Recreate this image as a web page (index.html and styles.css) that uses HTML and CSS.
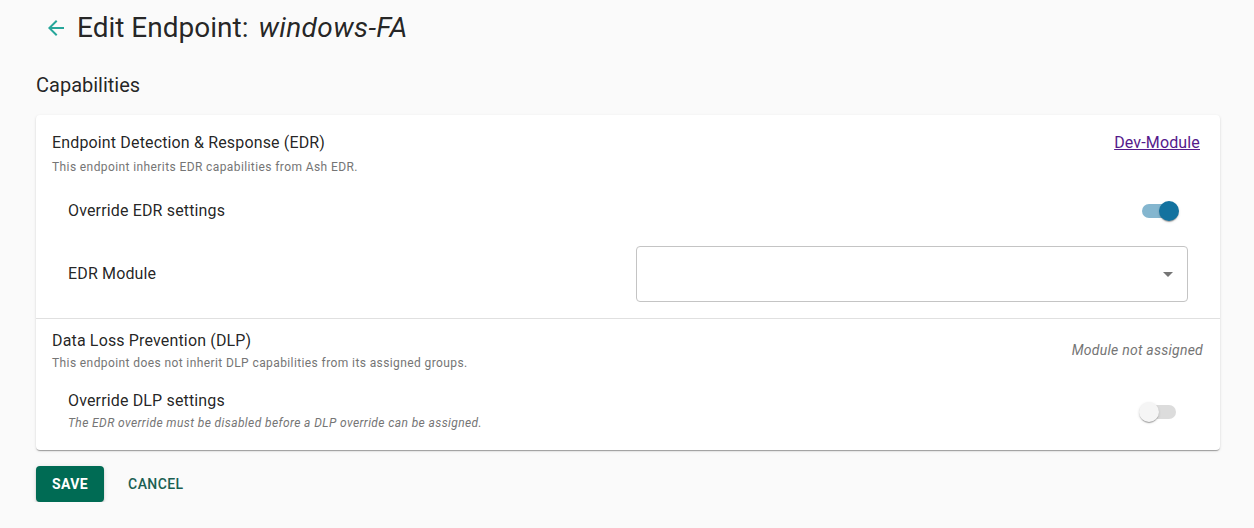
FILE: index.html
```html
<!DOCTYPE html>
<html lang="en">
<head>
  <meta charset="UTF-8">
  <title>Edit Endpoint</title>
  <link rel="stylesheet" href="styles.css">
</head>
<body>
  <div class="page">
    <div class="page-header">
      <a class="back-link" href="#">
        <svg width="24" height="24" viewBox="0 0 24 24"><path d="M20 11H7.83l5.59-5.59L12 4l-8 8 8 8 1.41-1.41L7.83 13H20v-2z" fill="#26a69a"/></svg>
      </a>
      <h1 class="page-title">Edit Endpoint: <em>windows-FA</em></h1>
    </div>

    <h2 class="section-title">Capabilities</h2>

    <div class="card">
      <div class="capability">
        <div class="capability-head">
          <div>
            <div class="capability-name">Endpoint Detection &amp; Response (EDR)</div>
            <div class="capability-desc">This endpoint inherits EDR capabilities from Ash EDR.</div>
          </div>
          <a class="module-link" href="#">Dev-Module</a>
        </div>

        <div class="setting-row">
          <div class="setting-label">Override EDR settings</div>
          <div class="toggle on"><span class="toggle-thumb"></span></div>
        </div>

        <div class="setting-row select-row">
          <div class="setting-label">EDR Module</div>
          <div class="select">
            <span class="select-arrow"></span>
          </div>
        </div>
      </div>

      <div class="capability last">
        <div class="capability-head">
          <div>
            <div class="capability-name">Data Loss Prevention (DLP)</div>
            <div class="capability-desc">This endpoint does not inherit DLP capabilities from its assigned groups.</div>
          </div>
          <span class="module-none">Module not assigned</span>
        </div>

        <div class="setting-row dlp-row">
          <div>
            <div class="setting-label">Override DLP settings</div>
            <div class="setting-hint">The EDR override must be disabled before a DLP override can be assigned.</div>
          </div>
          <div class="toggle off"><span class="toggle-thumb"></span></div>
        </div>
      </div>
    </div>

    <div class="actions">
      <button class="btn btn-save">Save</button>
      <button class="btn btn-cancel">Cancel</button>
    </div>
  </div>
</body>
</html>
```

FILE: styles.css
```css
body {
  margin: 0;
  padding: 0;
  background-color: #fafafa;
  font-family: Roboto, "Noto Sans", Arial, sans-serif;
  color: rgba(0, 0, 0, 0.87);
}

.page {
  width: 1184px;
  padding: 8px 0 0 36px;
}

.page-header {
  display: flex;
  align-items: center;
  height: 40px;
}

.back-link {
  display: flex;
  width: 24px;
  height: 24px;
  margin: 0 9px 0 8px;
}

.page-title {
  margin: 0;
  font-size: 28px;
  font-weight: 400;
  line-height: 36px;
}

.page-title em {
  margin-left: 3px;
  font-style: italic;
  letter-spacing: 0.4px;
}

.section-title {
  margin: 23px 0 0 0;
  font-size: 20px;
  font-weight: 400;
  line-height: 28px;
}

.card {
  margin-top: 16px;
  background-color: #fff;
  border-radius: 4px;
  box-shadow: 0 2px 1px -1px rgba(0, 0, 0, 0.2), 0 1px 1px 0 rgba(0, 0, 0, 0.14), 0 1px 3px 0 rgba(0, 0, 0, 0.12);
}

.capability {
  padding: 16px 20px 16px 16px;
  border-bottom: 1px solid #e0e0e0;
}

.capability.last {
  padding: 10px 17px 19px 16px;
  border-bottom: none;
}

.capability-head {
  display: flex;
  justify-content: space-between;
  align-items: center;
}

.capability-name {
  font-size: 16px;
  line-height: 24px;
  letter-spacing: 0.15px;
}

.capability-desc {
  margin-top: 4px;
  font-size: 12px;
  line-height: 16px;
  letter-spacing: 0.4px;
  color: #757575;
}

.capability.last .capability-desc {
  margin-top: 2px;
}

.capability-head .module-link {
  align-self: flex-start;
  font-size: 16px;
  line-height: 24px;
  letter-spacing: 0.15px;
  color: #551a8b;
}

.module-none {
  font-size: 14px;
  font-style: italic;
  letter-spacing: 0.25px;
  color: #757575;
}

.setting-row {
  display: flex;
  justify-content: space-between;
  align-items: center;
  height: 40px;
  margin-top: 16px;
  padding: 0 24px 0 16px;
}

.select-row {
  height: 56px;
  margin-top: 15px;
  padding-right: 12px;
}

.dlp-row {
  height: auto;
  margin-top: 18px;
  padding-right: 27px;
  align-items: flex-end;
}

.setting-label {
  font-size: 16px;
  line-height: 24px;
  letter-spacing: 0.15px;
}

.setting-hint {
  margin-top: 2px;
  font-size: 12px;
  line-height: 16px;
  font-style: italic;
  letter-spacing: 0.4px;
  color: #757575;
}

.select {
  position: relative;
  box-sizing: border-box;
  width: 552px;
  height: 56px;
  border: 1px solid #c4c4c4;
  border-radius: 4px;
}

.select-arrow {
  position: absolute;
  right: 14px;
  top: 25px;
  width: 0;
  height: 0;
  border-left: 5px solid transparent;
  border-right: 5px solid transparent;
  border-top: 5px solid #757575;
}

.toggle {
  position: relative;
  width: 34px;
  height: 14px;
  border-radius: 7px;
}

.toggle.on {
  background-color: #84b6cf;
}

.toggle.off {
  margin-bottom: 12px;
  background-color: #dcdcdc;
}

.toggle-thumb {
  position: absolute;
  top: -3px;
  width: 20px;
  height: 20px;
  border-radius: 50%;
  box-shadow: 0 2px 1px -1px rgba(0, 0, 0, 0.2), 0 1px 1px 0 rgba(0, 0, 0, 0.14), 0 1px 3px 0 rgba(0, 0, 0, 0.12);
}

.toggle.on .toggle-thumb {
  right: -3px;
  background-color: #13729f;
}

.toggle.off .toggle-thumb {
  left: -3px;
  background-color: #f5f5f5;
}

.actions {
  display: flex;
  align-items: center;
  margin-top: 16px;
}

.btn {
  height: 36px;
  padding: 0 16px;
  border: none;
  border-radius: 4px;
  font-family: Roboto, Arial, sans-serif;
  font-size: 14px;
  font-weight: 500;
  letter-spacing: 0.4px;
  text-transform: uppercase;
  cursor: pointer;
}

.btn-save {
  background-color: #006b54;
  color: #fff;
  font-weight: 700;
  box-shadow: 0 3px 1px -2px rgba(0, 0, 0, 0.2), 0 2px 2px 0 rgba(0, 0, 0, 0.14), 0 1px 5px 0 rgba(0, 0, 0, 0.12);
}

.btn-cancel {
  margin-left: 8px;
  background: none;
  color: #1b5f52;
}
```
